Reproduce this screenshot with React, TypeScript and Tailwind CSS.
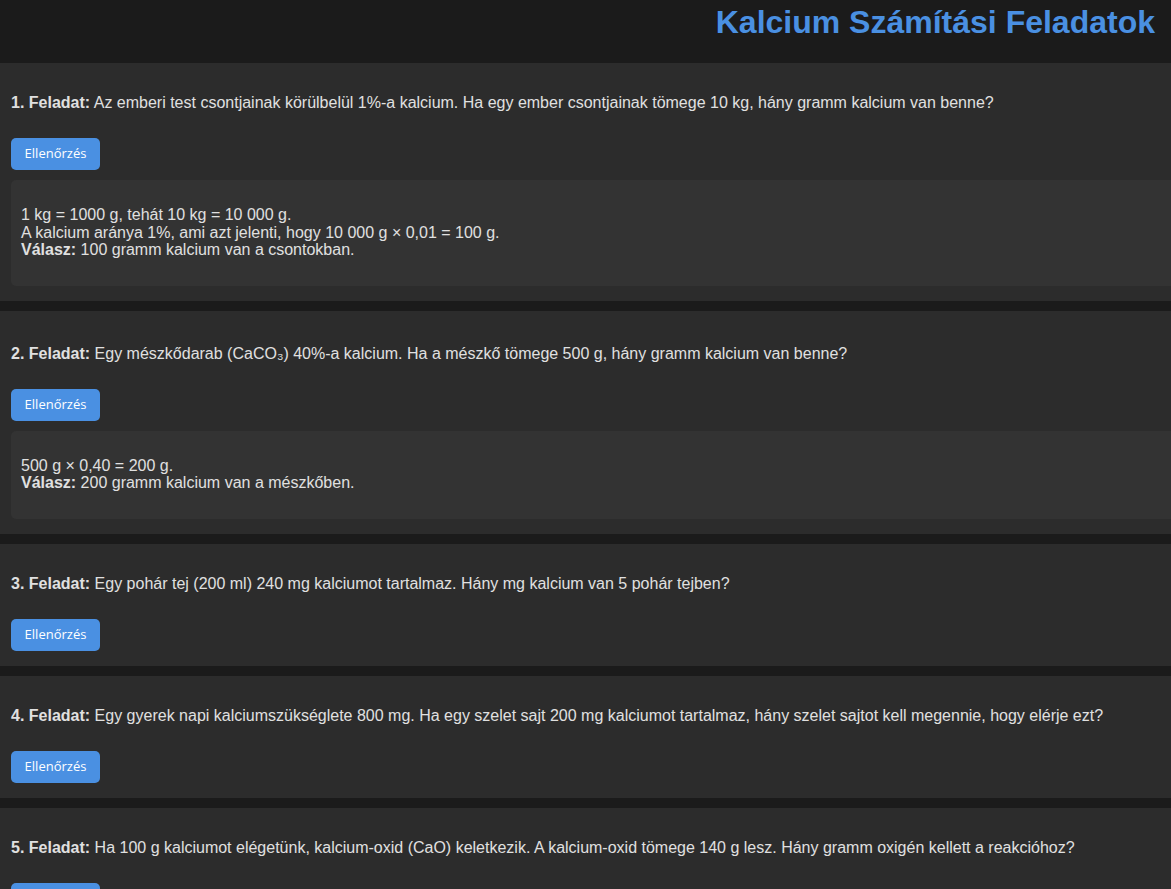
import React from "react";

const tasks: { q: React.ReactNode; a?: React.ReactNode; tall?: boolean }[] = [
  {
    q: <>Az emberi test csontjainak körülbelül 1%-a kalcium. Ha egy ember csontjainak tömege 10 kg, hány gramm kalcium van benne?</>,
    a: (
      <>
        1 kg = 1000 g, tehát 10 kg = 10 000 g.<br />
        A kalcium aránya 1%, ami azt jelenti, hogy 10 000 g × 0,01 = 100 g.<br />
        <b>Válasz:</b> 100 gramm kalcium van a csontokban.
      </>
    ),
  },
  {
    q: <>Egy mészkődarab (CaCO₃) 40%-a kalcium. Ha a mészkő tömege 500 g, hány gramm kalcium van benne?</>,
    a: (
      <>
        500 g × 0,40 = 200 g.<br />
        <b>Válasz:</b> 200 gramm kalcium van a mészkőben.
      </>
    ),
    tall: true,
  },
  { q: <>Egy pohár tej (200 ml) 240 mg kalciumot tartalmaz. Hány mg kalcium van 5 pohár tejben?</> },
  {
    q: <>Egy gyerek napi kalciumszükséglete 800 mg. Ha egy szelet sajt 200 mg kalciumot tartalmaz, hány szelet sajtot kell megennie, hogy elérje ezt?</>,
  },
  {
    q: <>Ha 100 g kalciumot elégetünk, kalcium-oxid (CaO) keletkezik. A kalcium-oxid tömege 140 g lesz. Hány gramm oxigén kellett a reakcióhoz?</>,
  },
];

export default function App() {
  return (
    <div
      className="min-h-[889px] bg-[#1b1b1b] text-[#e0e0e0] overflow-hidden"
      style={{ fontFamily: '"Liberation Sans", Arial, sans-serif' }}
    >
      <header className="h-[63px] flex justify-end pr-[16px]">
        <h1 className="text-[32px] font-bold text-[#4a90e2] leading-[37px] pt-[4px]">
          Kalcium Számítási Feladatok
        </h1>
      </header>
      <div className="flex flex-col gap-[10px]">
        {tasks.map((t, i) => (
          <section
            key={i}
            className={
              t.tall
                ? "bg-[#2c2c2c] pl-[11px] pt-[34px] pb-[15px]"
                : "bg-[#2c2c2c] pl-[11px] pt-[31px] pb-[15px]"
            }
          >
            <p className="text-[16px] leading-[18px]">
              <b>{i + 1}. Feladat:</b> {t.q}
            </p>
            <button
              className="mt-[26px] w-[89px] h-[32px] rounded-[5px] bg-[#4a90e2] text-white text-[13px] font-medium flex items-center justify-center"
              style={{ fontFamily: '"Open Sans", "Noto Sans", sans-serif' }}
            >
              Ellenőrzés
            </button>
            {t.a && (
              <div className="mt-[10px] bg-[#333333] rounded-l-[5px] pl-[10px] pt-[26px] pb-[27px] text-[16px] leading-[17.5px]">
                {t.a}
              </div>
            )}
          </section>
        ))}
      </div>
    </div>
  );
}
